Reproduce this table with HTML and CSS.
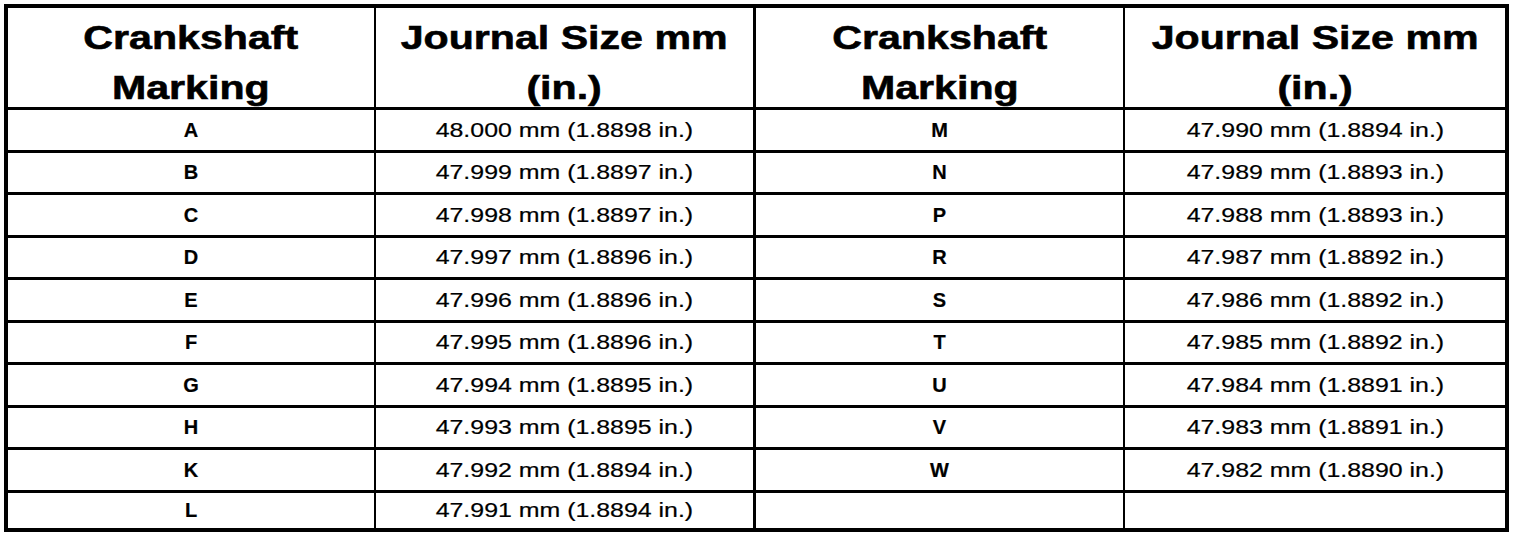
FILE: index.html
```html
<!DOCTYPE html>
<html lang="en">
<head>
    <meta charset="UTF-8">
    <meta name="viewport" content="width=device-width, initial-scale=1.0">
    <title>Crankshaft Journal Sizes</title>
    <link rel="stylesheet" href="styles.css">
</head>
<body>
    <table class="journal-table">
        <colgroup>
            <col class="col-mark-left">
            <col class="col-size-left">
            <col class="col-mark-right">
            <col class="col-size-right">
        </colgroup>
        <thead>
            <tr>
                <th><span class="stretch">Crankshaft<br>Marking</span></th>
                <th><span class="stretch">Journal Size mm<br>(in.)</span></th>
                <th><span class="stretch">Crankshaft<br>Marking</span></th>
                <th><span class="stretch">Journal Size mm<br>(in.)</span></th>
            </tr>
        </thead>
        <tbody>
            <tr>
                <td class="mark"><span class="stretch">A</span></td>
                <td><span class="stretch">48.000 mm (1.8898 in.)</span></td>
                <td class="mark"><span class="stretch">M</span></td>
                <td><span class="stretch">47.990 mm (1.8894 in.)</span></td>
            </tr>
            <tr>
                <td class="mark"><span class="stretch">B</span></td>
                <td><span class="stretch">47.999 mm (1.8897 in.)</span></td>
                <td class="mark"><span class="stretch">N</span></td>
                <td><span class="stretch">47.989 mm (1.8893 in.)</span></td>
            </tr>
            <tr>
                <td class="mark"><span class="stretch">C</span></td>
                <td><span class="stretch">47.998 mm (1.8897 in.)</span></td>
                <td class="mark"><span class="stretch">P</span></td>
                <td><span class="stretch">47.988 mm (1.8893 in.)</span></td>
            </tr>
            <tr>
                <td class="mark"><span class="stretch">D</span></td>
                <td><span class="stretch">47.997 mm (1.8896 in.)</span></td>
                <td class="mark"><span class="stretch">R</span></td>
                <td><span class="stretch">47.987 mm (1.8892 in.)</span></td>
            </tr>
            <tr>
                <td class="mark"><span class="stretch">E</span></td>
                <td><span class="stretch">47.996 mm (1.8896 in.)</span></td>
                <td class="mark"><span class="stretch">S</span></td>
                <td><span class="stretch">47.986 mm (1.8892 in.)</span></td>
            </tr>
            <tr>
                <td class="mark"><span class="stretch">F</span></td>
                <td><span class="stretch">47.995 mm (1.8896 in.)</span></td>
                <td class="mark"><span class="stretch">T</span></td>
                <td><span class="stretch">47.985 mm (1.8892 in.)</span></td>
            </tr>
            <tr>
                <td class="mark"><span class="stretch">G</span></td>
                <td><span class="stretch">47.994 mm (1.8895 in.)</span></td>
                <td class="mark"><span class="stretch">U</span></td>
                <td><span class="stretch">47.984 mm (1.8891 in.)</span></td>
            </tr>
            <tr>
                <td class="mark"><span class="stretch">H</span></td>
                <td><span class="stretch">47.993 mm (1.8895 in.)</span></td>
                <td class="mark"><span class="stretch">V</span></td>
                <td><span class="stretch">47.983 mm (1.8891 in.)</span></td>
            </tr>
            <tr>
                <td class="mark"><span class="stretch">K</span></td>
                <td><span class="stretch">47.992 mm (1.8894 in.)</span></td>
                <td class="mark"><span class="stretch">W</span></td>
                <td><span class="stretch">47.982 mm (1.8890 in.)</span></td>
            </tr>
            <tr>
                <td class="mark"><span class="stretch">L</span></td>
                <td><span class="stretch">47.991 mm (1.8894 in.)</span></td>
                <td class="mark"></td>
                <td></td>
            </tr>
        </tbody>
    </table>
</body>
</html>
```

FILE: styles.css
```css
body {
    margin: 0;
    padding: 4px;
    background-color: #fff;
    color: #000;
    font-family: "Liberation Sans", Arial, sans-serif;
}
.journal-table {
    border-collapse: separate;
    border-spacing: 0;
    border: 4px solid #000;
    table-layout: fixed;
    width: 1505px;
}
.col-mark-left { width: 368px; }
.col-size-left { width: 380px; }
.col-mark-right { width: 369px; }
.col-size-right { width: 380px; }

.journal-table th,
.journal-table td {
    padding: 0;
    text-align: center;
    border-right: 2px solid #000;
    border-bottom: 3px solid #000;
}
.journal-table th:nth-child(2),
.journal-table td:nth-child(2) {
    border-right-width: 3px;
}
.journal-table th:last-child,
.journal-table td:last-child {
    border-right: none;
}
.journal-table tbody tr:last-child td {
    border-bottom: none;
}

.stretch {
    display: inline-block;
    transform-origin: center;
}

.journal-table th {
    height: 95px;
    padding-top: 4px;
    vertical-align: top;
    font-size: 34px;
    font-weight: bold;
    line-height: 0;
    -webkit-text-stroke: 0.6px #000;
}
.journal-table th .stretch {
    line-height: 50px;
    margin-bottom: -6px;
    transform: scaleX(1.21);
}
.journal-table td {
    height: 39.5px;
    vertical-align: middle;
    font-size: 20px;
    line-height: 22px;
    -webkit-text-stroke: 0.2px #000;
}
.journal-table td .stretch {
    transform: scaleX(1.245);
}
.journal-table td.mark {
    font-weight: bold;
}
.journal-table td.mark .stretch {
    transform: scaleX(1.0);
}
.journal-table tbody tr:last-child td {
    height: 35px;
}
```
